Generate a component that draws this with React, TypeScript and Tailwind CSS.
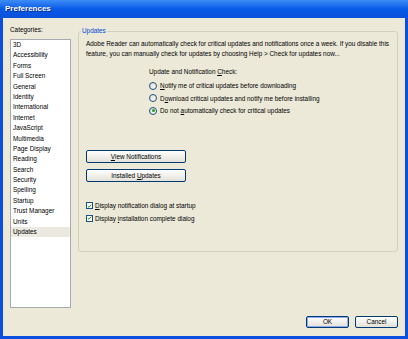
import React from 'react';

const categories = [
  '3D', 'Accessibility', 'Forms', 'Full Screen', 'General', 'Identity', 'International',
  'Internet', 'JavaScript', 'Multimedia', 'Page Display', 'Reading', 'Search', 'Security',
  'Spelling', 'Startup', 'Trust Manager', 'Units', 'Updates',
];

const font = { fontFamily: '"Liberation Sans", Arial, sans-serif' };

const Radio: React.FC<{ checked?: boolean; label: React.ReactNode }> = ({ checked, label }) => (
  <div className="flex items-center h-[12.5px]">
    <span className="w-[8px] h-[8px] rounded-full border border-[#1c5180] bg-gradient-to-br from-[#dcdcd6] to-white flex items-center justify-center">
      {checked && <span className="w-[3px] h-[3px] rounded-full bg-[#21a121]" />}
    </span>
    <span className="ml-[3px]">{label}</span>
  </div>
);

const Check: React.FC<{ label: React.ReactNode }> = ({ label }) => (
  <div className="flex items-center h-[12.5px]">
    <span className="w-[7px] h-[7px] border border-[#1c5180] bg-white flex items-center justify-center">
      <svg viewBox="0 0 7 7" className="w-[6px] h-[6px]">
        <path d="M1 3.5 L2.8 5.3 L6 1.5" fill="none" stroke="#21a121" strokeWidth="1.4" />
      </svg>
    </span>
    <span className="ml-[2px]">{label}</span>
  </div>
);

const XpButton: React.FC<{ className?: string; children: React.ReactNode; isDefault?: boolean }> = ({ className, children, isDefault }) => (
  <div
    className={`flex items-center justify-center border border-[#003c74] rounded-[2px] bg-gradient-to-b from-white to-[#e3e1d8] ${
      isDefault ? 'shadow-[inset_0_0_0_1px_#91a7f0]' : ''
    } ${className ?? ''}`}
  >
    {children}
  </div>
);

export default function App() {
  return (
    <div className="w-[408px] h-[339px] bg-[#0a4fe0] flex flex-col text-[6.4px] text-black" style={font}>
      {/* Title bar */}
      <div className="h-[18px] shrink-0 bg-gradient-to-b from-[#3c8cf7] via-[#0859e8] to-[#0a4fd8] flex items-center pl-[5px]">
        <span className="text-white font-bold text-[8px] [text-shadow:1px_1px_0_#0a2a8a]">Preferences</span>
      </div>

      {/* Body */}
      <div className="flex-1 mx-[3px] mb-[3px] bg-[#ece9d8] flex flex-col">
        <div className="flex pl-[7px] pt-[7px]">
          {/* Categories */}
          <div className="flex flex-col">
            <div className="leading-[10px] h-[10px]">Categories:</div>
            <div className="mt-[4px] w-[61px] h-[269px] bg-white border border-[#a5acb2]">
              {categories.map((c) => (
                <div
                  key={c}
                  className={`h-[10.4px] leading-[10.4px] pl-[2px] ${c === 'Updates' ? 'bg-[#ebe9e0]' : ''}`}
                >
                  {c}
                </div>
              ))}
            </div>
          </div>

          {/* Updates group */}
          <div className="ml-[7px] mt-[6px] w-[320px] h-[221px] border border-[#d0d0bf] rounded-[3px] relative pl-[7px]">
            <span className="absolute -top-[6px] left-[2px] px-[1px] bg-[#ece9d8] text-[#0046d5] leading-[10px]">Updates</span>
            <p className="mt-[7px] leading-[10.4px] pr-[1px]">
              Adobe Reader can automatically check for critical updates and notifications once a week. If you disable this
              feature, you can manually check for updates by choosing Help &gt; Check for updates now...
            </p>
            <div className="ml-[63px]">
              <div className="mt-[7px] leading-[10.4px]">
                Update and Notification <span className="underline">C</span>heck:
              </div>
              <div className="mt-[2.5px]">
                <Radio label={<><span className="underline">N</span>otify me of critical updates before downloading</>} />
                <Radio label={<>D<span className="underline">o</span>wnload critical updates and notify me before installing</>} />
                <Radio checked label={<>Do not <span className="underline">a</span>utomatically check for critical updates</>} />
              </div>
            </div>
            <XpButton className="mt-[33px] w-[100px] h-[13px]">
              <span><span className="underline">V</span>iew Notifications</span>
            </XpButton>
            <XpButton className="mt-[6px] w-[100px] h-[13px]">
              <span>Installed <span className="underline">U</span>pdates</span>
            </XpButton>
            <div className="mt-[17.5px]">
              <Check label={<><span className="underline">D</span>isplay notification dialog at startup</>} />
              <Check label={<>Display <span className="underline">i</span>nstallation complete dialog</>} />
            </div>
          </div>
        </div>

        {/* Dialog buttons */}
        <div className="flex justify-end gap-[6px] pr-[7px] mt-[8px]">
          <XpButton isDefault className="w-[43px] h-[12px]">OK</XpButton>
          <XpButton className="w-[43px] h-[12px]">Cancel</XpButton>
        </div>
      </div>
    </div>
  );
}
